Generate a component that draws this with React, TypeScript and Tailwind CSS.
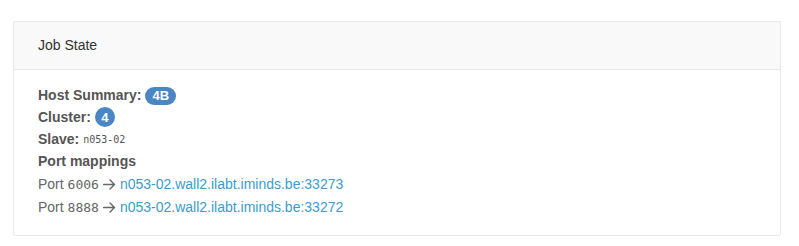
import React from 'react';

const ports = [
  { port: '6006', target: 'n053-02.wall2.ilabt.iminds.be:33273' },
  { port: '8888', target: 'n053-02.wall2.ilabt.iminds.be:33272' },
];

const Arrow = () => (
  <svg width="13" height="11" viewBox="0 0 13 11" className="mx-[4px] inline-block">
    <path d="M0.5 5.5 H11.5 M7 1 L11.5 5.5 L7 10" fill="none" stroke="#666" strokeWidth="1.4" strokeLinecap="round" strokeLinejoin="round" />
  </svg>
);

export default function App() {
  return (
    <div className="w-[799px] h-[246px] bg-white pt-[21px] pl-[13px] font-['Liberation_Sans',Arial,sans-serif] text-[14px] text-[#333]">
      <div className="w-[768px] border border-[#e8e8e8] rounded-[2px]">
        {/* Header */}
        <div className="h-[48px] bg-[#f9f9f9] border-b border-[#e8e8e8] flex items-center px-6">
          Job State
        </div>

        {/* Body */}
        <div className="px-6 pt-[15px] pb-[16px]">
          <div className="h-[21px] flex items-center gap-1 font-bold text-[#555]">
            Host Summary:
            <span className="bg-[#4a86c5] text-white text-[13px] rounded-full h-[18px] px-[7px] flex items-center leading-none">4B</span>
          </div>
          <div className="h-[22px] flex items-center gap-1 font-bold text-[#555]">
            Cluster:
            <span className="bg-[#4a86c5] text-white text-[13px] rounded-full w-[20px] h-[20px] flex items-center justify-center leading-none">4</span>
          </div>
          <div className="h-[22px] flex items-center gap-1 font-bold text-[#555]">
            Slave:
            <span className="font-normal text-[10px] font-['DejaVu_Sans_Mono',monospace] text-[#555]">n053-02</span>
          </div>
          <div className="h-[23px] flex items-center font-bold text-[#555]">Port mappings</div>
          {ports.map((p) => (
            <div key={p.port} className="h-[23px] flex items-center text-[#666]">
              Port&nbsp;<span className="font-['DejaVu_Sans_Mono',monospace] text-[13px]">{p.port}</span>
              <Arrow />
              <a href="#" className="text-[#3b9ccc]">{p.target}</a>
            </div>
          ))}
        </div>
      </div>
    </div>
  );
}
